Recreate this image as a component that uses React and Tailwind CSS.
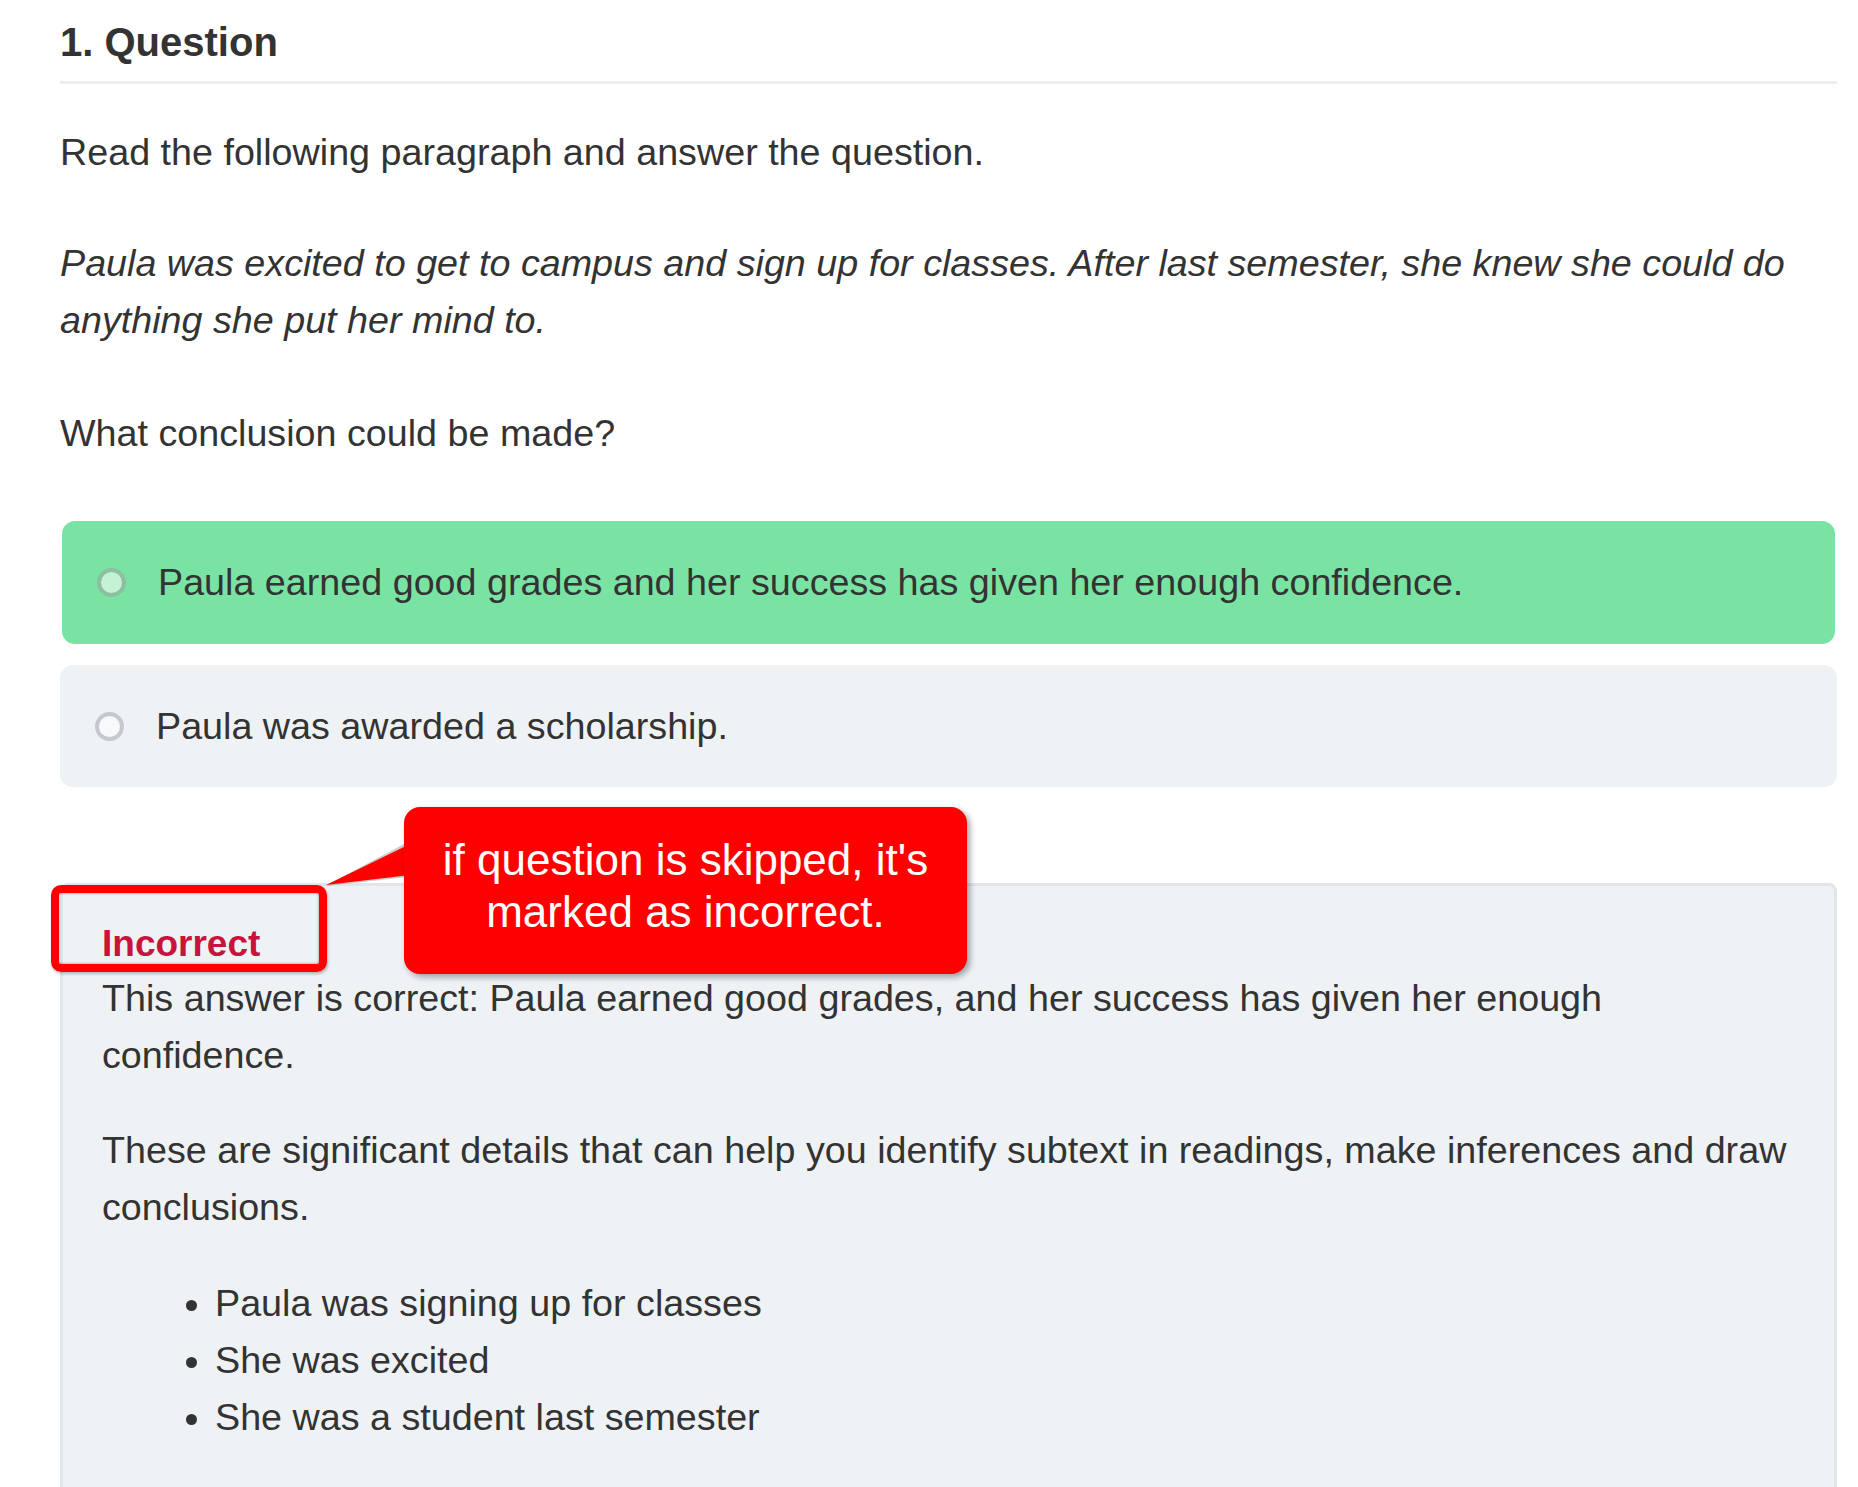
import React from 'react';

const options = [
  { id: 1, text: 'Paula earned good grades and her success has given her enough confidence.', correct: true },
  { id: 2, text: 'Paula was awarded a scholarship.', correct: false },
];

const details = ['Paula was signing up for classes', 'She was excited', 'She was a student last semester'];

function Option({ option }) {
  if (option.correct) {
    return (
      <div className="mx-[2px] h-[123px] flex items-center pl-[35px] bg-[#79e3a4] rounded-[13px]">
        <span className="w-[29px] h-[29px] rounded-full border-[4px] border-[#8fbf9f] bg-[#c3f2d5] shrink-0"></span>
        <span className="ml-[32px]">{option.text}</span>
      </div>
    );
  }
  return (
    <div className="mt-[21px] h-[122px] flex items-center pl-[35px] bg-[#eef2f5] rounded-[13px]">
      <span className="w-[29px] h-[29px] rounded-full border-[4px] border-[#c5c9ce] bg-[#f7f9fa] shrink-0"></span>
      <span className="ml-[32px]">{option.text}</span>
    </div>
  );
}

export default function App() {
  return (
    <div className="h-[1487px] overflow-hidden bg-white text-[#333333] pl-[60px] pr-[21px] font-['Liberation_Sans',Arial,sans-serif] text-[37.7px] leading-[57px]">
      <h2 className="pt-[20px] pb-[17px] text-[40px] leading-[44px] font-bold border-b-[3px] border-[#eeeeee]">
        1. Question
      </h2>

      <p className="mt-[40px]">Read the following paragraph and answer the question.</p>
      <p className="mt-[54px] italic">
        Paula was excited to get to campus and sign up for classes. After last semester, she knew she could do anything
        she put her mind to.
      </p>
      <p className="mt-[56px]">What conclusion could be made?</p>

      <div className="mt-[59px]">
        {options.map((option) => (
          <Option key={option.id} option={option} />
        ))}
      </div>

      <div className="relative mt-[96px]">
        <div className="border-[3px] border-[#e1e6eb] rounded-[8px] bg-[#eef2f5] pl-[39px] pr-[39px] pt-[38px] pb-[300px]">
          <div className="text-[37px] leading-[40px] font-bold text-[#c8133c]">Incorrect</div>
          <p className="mt-[6px]">
            This answer is correct: Paula earned good grades, and her success has given her enough confidence.
          </p>
          <p className="mt-[38px]">
            These are significant details that can help you identify subtext in readings, make inferences and draw
            conclusions.
          </p>
          <ul className="mt-[39px] list-disc pl-[113px]">
            {details.map((d) => (
              <li key={d}>{d}</li>
            ))}
          </ul>
        </div>

        {/* annotation: box around the status */}
        <div className="absolute left-[-9px] top-[2px] w-[276px] h-[87px] border-[8px] border-[#ff0000] rounded-[10px] shadow-[inset_0_0_3px_rgba(0,0,0,0.45),1px_2px_3px_rgba(0,0,0,0.25)]"></div>

        {/* annotation: callout */}
        <svg className="absolute left-[260px] top-[-42px]" width="92" height="50" viewBox="0 0 92 50">
          <polygon points="86,2 5,45 88,36" fill="#9a9a9a" opacity="0.5" />
          <polygon points="88,4 6,44 90,34" fill="#ff0000" />
        </svg>
        <div className="absolute left-[344px] top-[-76px] w-[563px] h-[167px] bg-[#ff0000] rounded-[16px] shadow-[3px_3px_6px_rgba(0,0,0,0.35)] flex items-center justify-center pb-[10px] text-white text-[44px] leading-[52px] text-center">
          <div>
            if question is skipped, it's
            <br />
            marked as incorrect.
          </div>
        </div>
      </div>
    </div>
  );
}
